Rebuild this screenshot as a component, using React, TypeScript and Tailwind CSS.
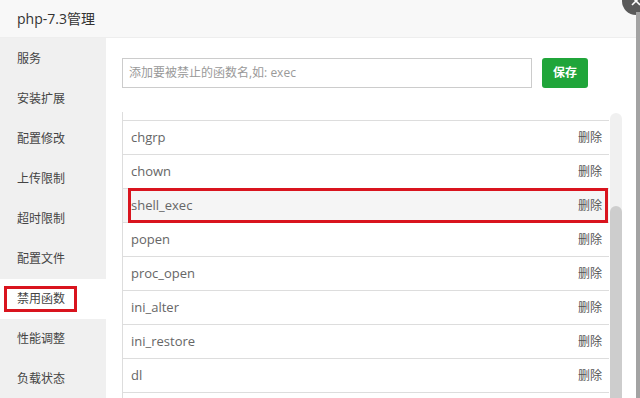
import React from "react";

const FONT = { fontFamily: '"Open Sans","Noto Sans CJK SC",sans-serif' };

const menu = ["服务", "安装扩展", "配置修改", "上传限制", "超时限制", "配置文件", "禁用函数", "性能调整", "负载状态"];
// first and last rows are only partly scrolled into view, so their names stay blank
const funcs = ["", "chgrp", "chown", "shell_exec", "popen", "proc_open", "ini_alter", "ini_restore", "dl", " "];

export default function App() {
  return (
    <div className="relative h-[398px] w-[640px] overflow-hidden bg-white" style={FONT}>
      {/* title bar */}
      <div className="flex h-[38px] items-center border-b border-[#eee] bg-[#f8f8f8] pl-[17px] text-[14px] text-[#333]">
        php-7.3管理
      </div>

      {/* close button, mostly off screen */}
      <div className="absolute left-[622px] top-[-13px] flex h-[28px] w-[28px] items-center justify-center rounded-full bg-[#5a5a5a]">
        <svg viewBox="0 0 10 10" className="h-[10px] w-[10px]" stroke="white" strokeWidth="1.6">
          <path d="M1 1L9 9M9 1L1 9" />
        </svg>
      </div>
      <div className="absolute bottom-0 right-0 top-[12px] w-[4px] bg-[#a3a3a3]" />

      <div className="flex h-[360px]">
        {/* side menu */}
        <div className="w-[106px] shrink-0 bg-[#f0f0f0] pt-[1px]">
          {menu.map((m) => (
            <div key={m} className={`relative flex h-[40px] items-center pl-[17px] text-[12px] text-[#444] ${m === "禁用函数" ? "bg-white" : ""}`}>
              {m}
              {m === "禁用函数" && (
                <div className="absolute left-[4px] top-[7px] h-[26px] w-[73px] border-[3px] border-[#d9141e]" />
              )}
            </div>
          ))}
        </div>

        {/* content */}
        <div className="flex-1 pl-[16px]">
          <div className="mt-[20px] flex gap-[10px]">
            <div className="flex h-[30px] w-[410px] items-center border border-[#ccc] pl-[6px] text-[12px] text-[#999]">
              添加要被禁止的函数名,如: exec
            </div>
            <button className="h-[30px] w-[46px] rounded-[3px] bg-[#20a53a] text-[12px] font-bold text-white">保存</button>
          </div>

          <div className="mt-[24px] flex">
            <div className="h-[290px] w-[487px] overflow-hidden border-l border-[#ddd]">
              <div className="mt-[-25px]">
                {funcs.map((f, i) => (
                  <div
                    key={i}
                    className={`relative flex h-[34px] items-center justify-between border-b border-[#ddd] pl-[8px] pr-[7px] ${f === "shell_exec" ? "bg-[#f5f5f5]" : ""}`}
                  >
                    <span className="text-[13px] text-[#666]">{f}</span>
                    {f.trim() && <span className="text-[12px] text-[#555]">删除</span>}
                    {f === "shell_exec" && (
                      <div className="absolute bottom-[-1px] left-[5px] right-[1px] top-[-1px] border-[3px] border-[#d9141e]" />
                    )}
                  </div>
                ))}
              </div>
            </div>
            {/* scrollbar */}
            <div className="ml-[1px] mt-[1px] flex h-[290px] w-[12px] flex-col rounded-t-[6px] bg-[#f0f0f0]">
              <div className="mt-[93px] flex-1 rounded-t-[6px] bg-[#cdcdcd]" />
            </div>
          </div>
        </div>
      </div>
    </div>
  );
}
